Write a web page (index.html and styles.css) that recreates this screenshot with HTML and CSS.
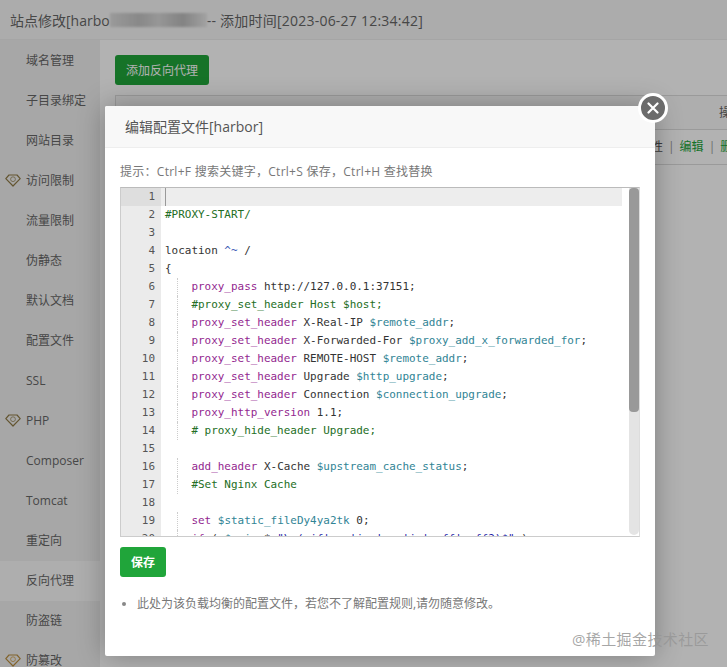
FILE: index.html
```html
<!DOCTYPE html>
<html lang="en">
<head>
  <meta charset="UTF-8" />
  <title>站点修改</title>
  <link rel="stylesheet" href="styles.css">
</head>
<body>
  <svg class="defs" width="0" height="0">
    <symbol id="diamond" viewBox="0 0 16 13">
      <path d="M4 1h8l3.2 3.6L8 12 .8 4.6z" fill="none" stroke="#8f7a45" stroke-width="1.2" stroke-linejoin="round"/>
      <circle cx="8" cy="5.2" r="2.4" fill="none" stroke="#9a8a5c" stroke-width=".8"/>
    </symbol>
  </svg>

  <header class="top-title">
    <span>站点修改[harbo</span><span class="masked"></span><span class="added">-- 添加时间[2023-06-27 12:34:42]</span>
  </header>

  <div class="page">
    <nav class="side">
      <div class="side-item">域名管理</div>
      <div class="side-item">子目录绑定</div>
      <div class="side-item">网站目录</div>
      <div class="side-item"><svg class="gem"><use href="#diamond"/></svg>访问限制</div>
      <div class="side-item">流量限制</div>
      <div class="side-item">伪静态</div>
      <div class="side-item">默认文档</div>
      <div class="side-item">配置文件</div>
      <div class="side-item">SSL</div>
      <div class="side-item"><svg class="gem"><use href="#diamond"/></svg>PHP</div>
      <div class="side-item">Composer</div>
      <div class="side-item">Tomcat</div>
      <div class="side-item">重定向</div>
      <div class="side-item active">反向代理</div>
      <div class="side-item">防盗链</div>
      <div class="side-item"><svg class="gem gem-gold"><use href="#diamond"/></svg>防篡改</div>
    </nav>

    <main class="content">
      <button class="add-btn">添加反向代理</button>
      <div class="table">
        <div class="table-head"><span class="th-last">操作</span></div>
        <div class="table-row">
          <span class="plain">属性</span><span class="sep">|</span><a>编辑</a><span class="sep">|</span><a>删除</a>
        </div>
      </div>
    </main>
  </div>

  <div class="shade"></div>

  <section class="modal">
    <div class="modal-title">编辑配置文件[harbor]</div>
    <button class="modal-close">
      <svg width="12" height="12" viewBox="0 0 12 12"><path d="M1.5 1.5l9 9M10.5 1.5l-9 9" stroke="#fff" stroke-width="2.2" stroke-linecap="round"/></svg>
    </button>
    <div class="modal-body">
      <p class="hint">提示：Ctrl+F 搜索关键字，Ctrl+S 保存，Ctrl+H 查找替换</p>
      <div class="editor">
        <div class="lines">
          <div class="line current"><span class="num">1</span><span class="code"><i class="caret"></i></span></div>
          <div class="line"><span class="num">2</span><span class="code"><span class="cm">#PROXY-START/</span></span></div>
          <div class="line"><span class="num">3</span><span class="code"></span></div>
          <div class="line"><span class="num">4</span><span class="code">location <span class="op">^~</span> /</span></div>
          <div class="line"><span class="num">5</span><span class="code">{</span></div>
          <div class="line"><span class="num">6</span><span class="code"><i class="indent"></i><span class="kw">proxy_pass</span> http://127.0.0.1:37151;</span></div>
          <div class="line"><span class="num">7</span><span class="code"><i class="indent"></i><span class="cm">#proxy_set_header Host $host;</span></span></div>
          <div class="line"><span class="num">8</span><span class="code"><i class="indent"></i><span class="kw">proxy_set_header</span> X-Real-IP <span class="var">$remote_addr</span>;</span></div>
          <div class="line"><span class="num">9</span><span class="code"><i class="indent"></i><span class="kw">proxy_set_header</span> X-Forwarded-For <span class="var">$proxy_add_x_forwarded_for</span>;</span></div>
          <div class="line"><span class="num">10</span><span class="code"><i class="indent"></i><span class="kw">proxy_set_header</span> REMOTE-HOST <span class="var">$remote_addr</span>;</span></div>
          <div class="line"><span class="num">11</span><span class="code"><i class="indent"></i><span class="kw">proxy_set_header</span> Upgrade <span class="var">$http_upgrade</span>;</span></div>
          <div class="line"><span class="num">12</span><span class="code"><i class="indent"></i><span class="kw">proxy_set_header</span> Connection <span class="var">$connection_upgrade</span>;</span></div>
          <div class="line"><span class="num">13</span><span class="code"><i class="indent"></i><span class="kw">proxy_http_version</span> 1.1;</span></div>
          <div class="line"><span class="num">14</span><span class="code"><i class="indent"></i><span class="cm"># proxy_hide_header Upgrade;</span></span></div>
          <div class="line"><span class="num">15</span><span class="code"></span></div>
          <div class="line"><span class="num">16</span><span class="code"><i class="indent"></i><span class="kw">add_header</span> X-Cache <span class="var">$upstream_cache_status</span>;</span></div>
          <div class="line"><span class="num">17</span><span class="code"><i class="indent"></i><span class="cm">#Set Nginx Cache</span></span></div>
          <div class="line"><span class="num">18</span><span class="code"></span></div>
          <div class="line"><span class="num">19</span><span class="code"><i class="indent"></i><span class="kw">set</span> <span class="var">$static_fileDy4ya2tk</span> 0;</span></div>
          <div class="line"><span class="num">20</span><span class="code"><i class="indent"></i><span class="kw">if</span> ( <span class="var">$uri</span> ~* <span class="str">"\.(gif|png|jpg|css|js|woff|woff2)$"</span> )</span></div>
        </div>
        <div class="scrollbar"><div class="thumb"></div></div>
      </div>
      <button class="save-btn">保存</button>
      <ul class="notes">
        <li>此处为该负载均衡的配置文件，若您不了解配置规则,请勿随意修改。</li>
      </ul>
    </div>
  </section>

  <div class="watermark">@稀土掘金技术社区</div>
</body>
</html>
```

FILE: styles.css
```css
* {
  box-sizing: border-box;
}

html, body {
  height: 100%;
}

body {
  margin: 0;
  overflow: hidden;
  background: #fff;
  color: #666;
  font-family: "Open Sans", "Noto Sans CJK SC", sans-serif;
  font-size: 12px;
}

.defs {
  position: absolute;
}

.top-title {
  height: 40px;
  display: flex;
  align-items: center;
  padding-left: 10px;
  font-size: 14px;
  background: #f7f7f7;
  border-bottom: 1px solid #ededed;
  white-space: nowrap;
}

.masked {
  width: 97px;
  height: 14px;
  background: linear-gradient(90deg, #ddd 0, #c4c4c4 30%, #d8d8d8 50%, #bcbcbc 75%, #e8e8e8 100%);
  filter: blur(1px);
}

.added {
  letter-spacing: 0.23px;
}

.page {
  display: flex;
  height: 627px;
}

.side {
  flex: none;
  width: 100px;
  padding-top: 1px;
  background: #f0f0f0;
}

.side-item {
  position: relative;
  height: 40px;
  line-height: 40px;
  padding-left: 26px;
  white-space: nowrap;
  color: #666;
}

.side-item.active {
  background: #fafafa;
}

.gem {
  position: absolute;
  left: 5px;
  top: 13px;
  width: 16px;
  height: 13px;
}

.gem-gold {
  filter: sepia(1) saturate(2.5);
}

.content {
  flex: 1;
  min-width: 0;
  padding: 15px;
  background: #fff;
}

.add-btn {
  display: block;
  width: 94px;
  height: 30px;
  padding: 0;
  border: 0;
  border-radius: 3px;
  background: #20a53a;
  color: #fff;
  font: inherit;
}

.table {
  margin-top: 10px;
  margin-right: -15px;
  border: 1px solid #ddd;
  border-right: 0;
}

.table-head {
  height: 34px;
  line-height: 34px;
  background: #fafafa;
  border-bottom: 1px solid #ddd;
  white-space: nowrap;
  overflow: hidden;
  padding-left: 603px;
}

.table-row {
  height: 34px;
  line-height: 34px;
  white-space: nowrap;
  overflow: hidden;
  padding-left: 523px;
  color: #20a53a;
}

.table-row a {
  color: #20a53a;
}

.table-row .plain {
  color: #555;
}

.sep {
  margin: 0 5px;
  color: #999;
}

.shade {
  position: absolute;
  inset: 0;
  background: rgba(0, 0, 0, 0.3);
}

.modal {
  position: absolute;
  left: 105px;
  top: 106px;
  width: 550px;
  height: 550px;
  background: #fff;
  border-radius: 2px;
  box-shadow: 0 0 28px rgba(0, 0, 0, 0.3);
}

.modal-title {
  height: 42px;
  line-height: 42px;
  padding-left: 20px;
  font-size: 14px;
  color: #555;
  background: #f8f8f8;
  border-bottom: 1px solid #eee;
  border-radius: 2px 2px 0 0;
}

.modal-close {
  position: absolute;
  right: -13px;
  top: -13px;
  width: 30px;
  height: 30px;
  padding: 0;
  display: flex;
  align-items: center;
  justify-content: center;
  border: 3px solid #fff;
  border-radius: 50%;
  background: #6b6b6b;
}

.modal-body {
  padding: 16px 15px 15px;
}

.hint {
  margin: 0 0 7px;
  height: 16px;
  line-height: 16px;
  color: #777;
  letter-spacing: 0.27px;
}

.editor {
  display: flex;
  width: 520px;
  height: 350px;
  overflow: hidden;
  border: 1px solid #ccc;
  border-top-color: #bbb;
  border-right-color: #ddd;
}

.lines {
  width: 501px;
  font-family: "DejaVu Sans Mono", monospace;
  font-size: 10.96px;
  color: #333;
}

.line {
  display: flex;
  height: 18px;
  line-height: 18px;
  white-space: pre;
}

.num {
  flex: none;
  width: 40px;
  padding-right: 6px;
  text-align: right;
  background: #ebebeb;
  color: #555;
}

.code {
  flex: 1;
  padding-left: 4px;
}

.current .num {
  background: #dedede;
}

.current .code {
  background: #ededed;
}

.caret {
  display: block;
  width: 1px;
  height: 18px;
  background: #999;
}

.indent {
  display: inline-block;
  height: 18px;
  margin-left: 12px;
  width: 14.4px;
  border-left: 1px dotted #ccc;
  vertical-align: top;
}

.kw {
  color: #93278f;
}

.cm {
  color: #236e24;
}

.var {
  color: #318495;
}

.op {
  color: #3b5bb5;
}

.str {
  color: #1a1aa6;
}

.scrollbar {
  width: 10px;
  height: 347px;
  margin-left: 7px;
  border-radius: 0 0 5px 5px;
  background: #e4e4e4;
}

.thumb {
  height: 224px;
  border-radius: 4px;
  background: #999;
}

.save-btn {
  display: block;
  width: 46px;
  height: 30px;
  margin-top: 10px;
  padding: 0;
  border: 0;
  border-radius: 3px;
  background: #20a53a;
  color: #fff;
  font: inherit;
  font-weight: bold;
}

.notes {
  margin: 19px 0 0;
  padding-left: 17px;
  color: #777;
  line-height: 16px;
}

.notes li::marker {
  color: #888;
}

.watermark {
  position: absolute;
  right: 18px;
  top: 629px;
  font-size: 15px;
  line-height: 20px;
  color: rgba(150, 150, 150, 0.85);
  letter-spacing: 0.4px;
}
```
